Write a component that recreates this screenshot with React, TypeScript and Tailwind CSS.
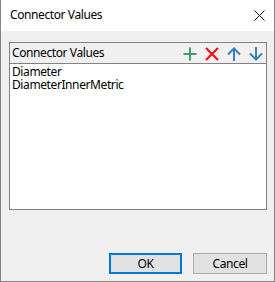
const font = { fontFamily: '"Segoe UI", "Noto Sans", sans-serif' };

function PlusIcon() {
  return (
    <svg width="14" height="14" viewBox="0 0 14 14">
      <path d="M7 0.5V13.5M0.5 7H13.5" stroke="#3f9a69" strokeWidth="2" />
    </svg>
  );
}

function CrossIcon() {
  return (
    <svg width="14" height="14" viewBox="0 0 14 14">
      <path d="M1 1L13 13M13 1L1 13" stroke="#f41414" strokeWidth="2.2" />
    </svg>
  );
}

function UpIcon() {
  return (
    <svg width="14" height="14" viewBox="0 0 14 14">
      <path d="M7 1.5V14M1 7.5L7 1.5L13 7.5" stroke="#3d7dc0" strokeWidth="2" fill="none" />
    </svg>
  );
}

function DownIcon() {
  return (
    <svg width="14" height="14" viewBox="0 0 14 14">
      <path d="M7 0V12.5M1 6.5L7 12.5L13 6.5" stroke="#3d7dc0" strokeWidth="2" fill="none" />
    </svg>
  );
}

export default function App() {
  const values = ["Diameter", "DiameterInnerMetric"];

  return (
    <div
      className="w-[275px] h-[282px] flex flex-col border border-t-0 border-[#858585] bg-[#f0f0f0] text-[12px] tracking-[-0.4px] text-black"
      style={font}
    >
      {/* Title bar */}
      <div className="h-[31px] bg-white flex items-center justify-between pl-[9px] pr-[9px]">
        <span className="leading-[14px] mt-[-1px]">Connector Values</span>
        <svg width="11" height="11" viewBox="0 0 11 11">
          <path d="M0.5 0.5L10.5 10.5M10.5 0.5L0.5 10.5" stroke="#111" strokeWidth="1" />
        </svg>
      </div>

      {/* Body */}
      <div className="flex-1 flex flex-col pl-[8px] pr-[7px] pt-[11px]">
        <div className="w-[258px] h-[168px] border border-[#828282] flex flex-col bg-white">
          <div className="h-[21px] bg-[#f0f0f0] border-b border-[#828282] flex items-center justify-between pl-[2px] pr-[3px]">
            <span className="leading-[14px]">Connector Values</span>
            <div className="flex items-center gap-[8px] pt-[2px]">
              <PlusIcon />
              <CrossIcon />
              <UpIcon />
              <DownIcon />
            </div>
          </div>
          <div className="flex flex-col pl-[2px] pt-[1px]">
            {values.map((v) => (
              <span key={v} className="h-[13px] leading-[13px]">
                {v}
              </span>
            ))}
          </div>
        </div>

        <div className="mt-[43px] flex justify-end gap-[11px]">
          <button className="w-[73px] h-[21px] bg-[#e1e1e1] border-2 border-[#0078d7] leading-none">
            OK
          </button>
          <button className="w-[74px] h-[21px] bg-[#e1e1e1] border border-[#adadad] leading-none">
            Cancel
          </button>
        </div>
      </div>
    </div>
  );
}
